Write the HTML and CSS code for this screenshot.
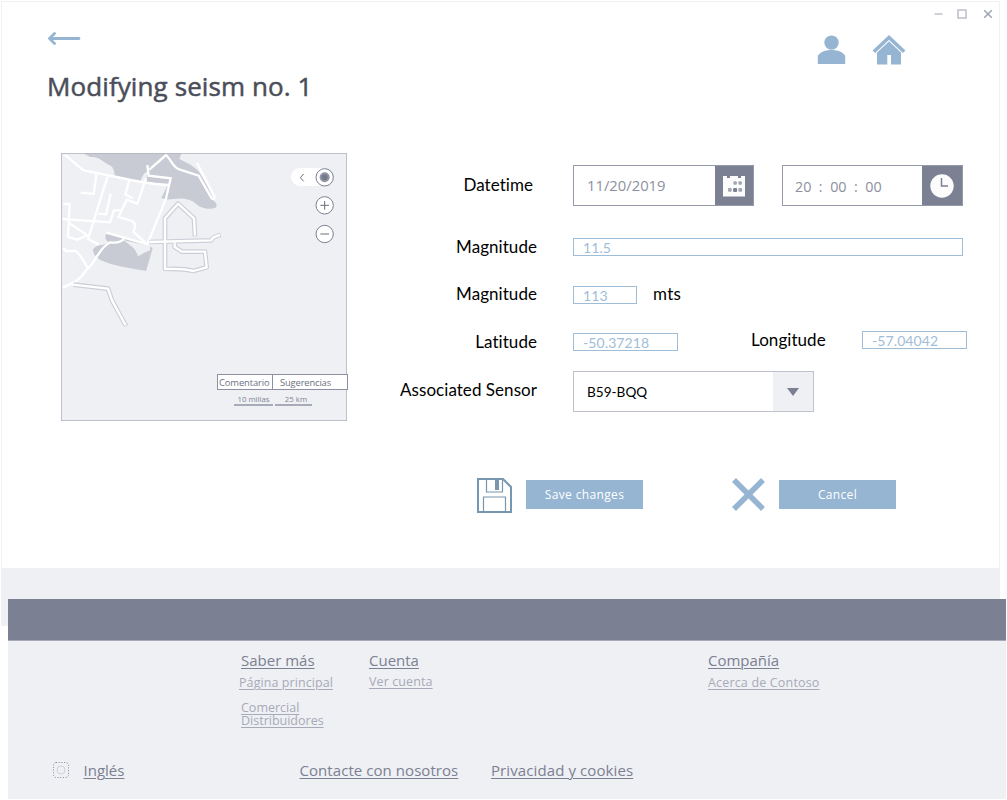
FILE: index.html
```html
<!DOCTYPE html>
<html lang="es">
<head>
<meta charset="utf-8">
<title>Modifying seism no. 1</title>
<link rel="stylesheet" href="styles.css">
</head>
<body>
<div class="window">
  <div class="titlebar">
    <svg class="win-min" width="9" height="12" viewBox="0 0 9 12"><path d="M0.5 6H8.5" stroke="#cfd0d8" stroke-width="2"/></svg>
    <svg class="win-max" width="10" height="12" viewBox="0 0 10 12"><rect x="1" y="2" width="8" height="8" fill="none" stroke="#b3b6c2" stroke-width="1.3"/></svg>
    <svg class="win-close" width="10" height="12" viewBox="0 0 10 12"><path d="M1.2 2.2 8.8 9.8M8.8 2.2 1.2 9.8" stroke="#a0a4b2" stroke-width="1.5"/></svg>
  </div>
  <div class="topbar">
    <svg class="back" width="34" height="14" viewBox="0 0 34 14"><path d="M31 6.5H1.5M6.5 1.5 1.5 6.5 6.5 11.5" fill="none" stroke="#95b5d2" stroke-width="2.8" stroke-linecap="round" stroke-linejoin="round"/></svg>
    <div class="nav-icons">
      <svg width="29" height="30" viewBox="0 0 29 30" fill="#95b5d2"><circle cx="14.5" cy="7.6" r="7.2"/><path d="M.8 29V21C3 17 8 15 14.5 15S26 17 28.2 21V29Z"/></svg>
      <svg width="34" height="30" viewBox="0 0 34 30"><path d="M5 15 17 4.5 29 15V29.5H19V20H15.3V29.5H5Z" fill="#95b5d2"/><path d="M1.8 17.6 17 3.4 32.2 17.6" fill="none" stroke="#fff" stroke-width="4.2"/><path d="M1.8 16.7 17 2.5 32.2 16.7" fill="none" stroke="#95b5d2" stroke-width="3.6"/></svg>
    </div>
  </div>
  <h1 class="title">Modifying seism no. 1</h1>
  <div class="content">
    <div class="map">
      <svg width="286" height="268" viewBox="33 24 858 804">
        <rect x="33" y="24" width="858" height="804" fill="#eff0f4"/>
        <g fill="#c8cad4">
          <path d="M98 24H395L388 42C398 48 432 60 448 82C458 100 478 130 491 166Q505 182 497 188C478 195 452 190 438 176C420 160 394 158 370 162Q345 166 334 158L354 120 272 108 288 78 272 108 194 92Q192 66 182 62C160 54 152 34 120 36Z"/>
          <path d="M168 266 292 300 308 310 288 378C250 370 190 364 150 344Q126 330 130 312Q140 300 158 300L176 292Q162 284 168 266Z"/>
        </g>
        <path d="M272 107Q280 82 292 80L290 110ZM215 284 262 295 300 302 300 316Q280 324 264 334Q256 312 244 304Q230 290 215 284Z" fill="#eff0f4"/>
        <g fill="none" stroke="#fff" stroke-width="7">
          <path d="M45 30C75 52 85 68 105 77Q150 86 200 96C250 108 290 116 354 120"/>
          <path d="M298 74 348 30C365 45 368 68 390 74L446 92 485 160Q492 168 494 156L441 54"/>
          <path d="M292 60 296 92 362 100 348 160 292 298 168 262"/>
          <path d="M139 88 131 147 92 143M173 96C150 160 135 220 114 282L146 298M182 146 168 208 145 206M237 108 226 148 248 160M288 100 262 176 230 164 206 216 246 228Q262 236 250 260L292 298M38 222 180 232 192 196 212 196M40 177H59L54 276 82 284 110 272M54 232 114 272M40 308 48 318 78 318Q100 340 113 370"/>
          <path d="M38 428C80 410 92 402 108 376C140 350 145 310 180 292Q212 296 222 280"/>
        </g>
        <g fill="none" stroke-linejoin="round">
          <g stroke="#cdcfd8" stroke-width="14"><path d="M70 419 174 431 186 466 228 543M435 274 432 220 384 176 345 220V372Q400 370 430 378L470 367 465 320H396L374 306V290M298 291 484 286Q486 276 512 270"/></g>
          <g stroke="#fff" stroke-width="7"><path d="M68 419 174 431 186 466 227 541M435 272 432 220 384 176 345 220V372Q400 370 430 378L470 367 465 320H396L374 306V290M298 291 484 286Q486 276 510 270"/></g>
        </g>
        <rect x="723" y="69" width="125" height="54" rx="27" fill="#fff"/>
        <g fill="#fff" stroke="#7b8092" stroke-width="3"><circle cx="824" cy="97" r="26"/><circle cx="824" cy="181" r="26"/><circle cx="824" cy="267" r="26"/></g>
        <path d="M761 87 751 98 761 109M811 181H837M824 168V194M811 267H837" fill="none" stroke="#696e7d" stroke-width="3"/>
        <circle cx="824" cy="97" r="15" fill="#9397a5"/><circle cx="824" cy="97" r="9" fill="#757a8b"/>
        <rect x="34" y="25" width="856" height="802" fill="none" stroke="#b4b7c3" stroke-width="3"/>
      </svg>
      <div class="feedback"><span class="chip chip-a">Comentario</span><span class="chip chip-b">Sugerencias</span></div>
      <div class="scale"><span class="miles">10 millas</span><span class="km">25 km</span></div>
    </div>
    <div class="form">
      <div class="row row-date">
        <label class="label label-date">Datetime</label>
        <div class="picker"><span class="picker-value">11/20/2019</span><span class="picker-icon date-icon">
          <svg width="22" height="22" viewBox="0 0 22 22"><path d="M0 1H22V21.5H0Z" fill="#fcfcfd"/><path d="M4 0H7V3H4ZM15 0H18V3H15Z" fill="#7b8092"/><g fill="#a3a6b3"><rect x="10.4" y="6.3" width="3.5" height="3.5" rx="1"/><rect x="15.4" y="6.3" width="3.5" height="3.5" rx="1"/><rect x="5" y="13.1" width="3.7" height="3.7" rx="1"/><rect x="15.4" y="13.1" width="3.7" height="3.7" rx="1"/></g><rect x="10.1" y="13" width="4" height="4" rx="1" fill="#7b8092"/></svg>
        </span></div>
        <div class="picker time"><span class="time-value"><span class="hour">20</span><span>:</span><span>00</span><span>:</span><span>00</span></span><span class="picker-icon time-icon">
          <svg width="24" height="24" viewBox="0 0 24 24"><circle cx="12" cy="12" r="11.7" fill="#fcfcfd"/><path d="M11.5 4V12H18" fill="none" stroke="#7b8092" stroke-width="1.5"/></svg>
        </span></div>
      </div>
      <div class="row row-mag"><label class="label">Magnitude</label><div class="input wide">11.5</div></div>
      <div class="row row-depth"><label class="label">Magnitude</label><div class="input short">113</div><span class="unit">mts</span></div>
      <div class="row row-coord"><label class="label">Latitude</label><div class="input coord">-50.37218</div>
        <div class="longitude"><label class="label-long">Longitude</label><div class="input coord">-57.04042</div></div></div>
      <div class="row row-sensor"><label class="label label-sensor">Associated Sensor</label>
        <div class="select"><span class="select-value">B59-BQQ</span><span class="select-arrow"><svg width="12" height="8" viewBox="0 0 12 8"><path d="M0 0H12L6 8Z" fill="#7b8092"/></svg></span></div></div>
      <div class="actions">
        <svg width="35" height="35" viewBox="0 0 35 35" fill="none" stroke="#7797b0"><path d="M1 1H26L34 9V34H1Z" stroke-width="2"/><path d="M9.5 1V14H25.5V1M6.5 34V19H28.5V34" stroke-width="1.2"/><path d="M18 2H22V12H18Z" fill="#7797b0" stroke="none"/></svg>
        <button class="btn save">Save changes</button>
        <svg class="cross" width="33" height="33" viewBox="0 0 33 33"><path d="M2 2 31 31M31 2 2 31" stroke="#95b5d2" stroke-width="5.6"/></svg>
        <button class="btn cancel">Cancel</button>
      </div>
    </div>
  </div>
</div>
<footer class="footer">
  <div class="footer-bar"></div>
  <div class="footer-cols">
    <div class="col col-more"><a class="head saber">Saber más</a><a class="link pagina">Página principal</a><a class="link comercial">Comercial</a><a class="link distribuidores">Distribuidores</a></div>
    <div class="col col-account"><a class="head cuenta">Cuenta</a><a class="link vercuenta">Ver cuenta</a></div>
    <div class="col"><a class="head compania">Compañía</a><a class="link acerca">Acerca de Contoso</a></div>
  </div>
  <div class="footer-bottom">
    <svg width="18" height="18" viewBox="0 0 18 18" fill="none"><rect x="1.5" y="1.5" width="15" height="15" rx="2.5" stroke="#85899a" stroke-dasharray="1 1.7"/><circle cx="9" cy="9" r="4" stroke="#cfd1d9"/></svg>
    <div class="slot-lang"><a class="head">Inglés</a></div><div class="slot-contact"><a class="head contacte">Contacte con nosotros</a></div><a class="head privacidad">Privacidad y cookies</a>
  </div>
</footer>
</body>
</html>
```
FILE: styles.css
```css
* { box-sizing: border-box; }
body { margin: 0; width: 1007px; height: 800px; overflow: hidden; background: #fff; font-family: "Open Sans", "Noto Sans", sans-serif; font-variant-ligatures: none; }
svg { display: block; flex: none; }
span, a, label { white-space: nowrap; }
.window { width: 999px; height: 625px; margin: 1px 0 0 1px; border: 1px solid #f1f1f3; background: linear-gradient(#fff 566px, #eff0f4 566px); }
.titlebar { display: flex; justify-content: flex-end; height: 24px; padding: 6px 6px 0 0; }
.win-min { margin-right: 14px; }
.win-max { margin-right: 16px; }
.topbar { display: flex; justify-content: space-between; height: 40px; padding: 6px 93px 0 46px; }
.nav-icons { display: flex; gap: 26px; margin-top: 3px; }
.title { margin: 2px 0 0 45px; height: 36px; line-height: 36px; font-size: 26px; font-weight: 400; letter-spacing: .1px; -webkit-text-stroke: .5px #4a4e5a; color: #4a4e5a; white-space: nowrap; }
.content { display: flex; margin: 49px 0 0 59px; }
.map { position: relative; width: 286px; height: 268px; flex: none; }
.feedback { position: absolute; left: 156px; top: 221px; display: flex; font-size: 9.4px; color: #6d7282; line-height: 15px; }
.chip { height: 16px; border: 1px solid #8c90a0; background: #fff; }
.chip-a { width: 55px; padding-left: 1px; border-right: 0; letter-spacing: -.1px; }
.chip-b { width: 76px; padding-left: 7px; letter-spacing: -.15px; }
.scale { position: absolute; left: 173px; top: 240px; display: flex; gap: 2px; font-size: 7.8px; line-height: 12px; color: #7f8394; text-align: center; }
.miles, .km { height: 13px; border-bottom: 2px solid #a9acb8; }
.miles { width: 39px; }
.km { width: 37px; padding-left: 5px; }
.form { margin-left: 43px; padding-top: 12px; }
.row { display: flex; align-items: center; }
.label, .label-long, .unit { position: relative; font-family: Lato, sans-serif; font-size: 17px; line-height: 18px; letter-spacing: .05px; color: #000; }
.label { width: 147px; margin-right: 36px; text-align: right; }
.label-date { padding: 0 4px 2px 0; }
.row-date { height: 42px; }
.picker { display: flex; align-items: center; width: 181px; height: 41px; margin-top: -1px; border: 1px solid #9599a8; font-size: 14.8px; color: #8c90a0; }
.picker-value { width: 141px; padding: 0 0 2px 13px; }
.picker-icon { display: flex; align-items: center; justify-content: center; align-self: stretch; flex: 1; background: #7b8092; }
.time { margin-left: 28px; }
.time-value { display: flex; width: 139px; padding: 1px 0 0 12px; gap: 7.5px; font-size: 14.3px; }
.row-mag { height: 18px; margin-top: 31px; }
.row-depth { height: 18px; margin-top: 30px; }
.row-depth .label, .row-depth .unit { padding-bottom: 2px; }
.row-coord { height: 19px; margin-top: 28px; }
.row-sensor { height: 41px; margin-top: 20px; }
.input { height: 18px; border: 1px solid #9fbdd6; padding-left: 9px; font-family: Lato, sans-serif; font-size: 14px; line-height: 17px; letter-spacing: .1px; color: #9fbdd8; }
.wide { width: 390px; }
.short { width: 64px; }
.coord { width: 105px; }
.unit { margin-left: 16px; letter-spacing: .3px; }
.longitude { display: flex; align-items: center; margin: -4px 0 0 73px; }
.label-long { width: 75px; margin-right: 36px; }
.label-sensor { padding-bottom: 3px; }
.select { display: flex; align-items: center; width: 241px; height: 41px; border: 1px solid #bfc1cc; font-family: Lato, sans-serif; font-size: 13.6px; color: #000; }
.select-value { width: 199px; padding-left: 13px; }
.select-arrow { display: flex; align-items: center; justify-content: center; align-self: stretch; flex: 1; background: #eff0f4; }
.actions { display: flex; align-items: flex-start; margin: 66px 0 0 87px; }
.btn { width: 117px; height: 29px; margin: 2px 0 0 14px; padding: 0; border: 0; background: #95b5d2; color: #fff; font: 12px/29px "Open Sans", sans-serif; letter-spacing: .35px; }
.cross { margin-left: 89px; }
.cancel { margin-left: 14px; }
.footer { position: relative; width: 998px; height: 200px; margin: -27px 0 0 8px; background: #eff0f4; color: #7b8092; }
.footer-bar { height: 41px; background: #7b8092; border-bottom: 1px solid #a6a9b8; height: 42px; }
.footer-cols { display: flex; height: 118px; padding: 8px 0 0 233px; }
.col { display: flex; flex-direction: column; align-items: flex-start; }
.col-more { width: 128px; }
.col-account { width: 339px; }
.head, .link { text-decoration: underline; text-underline-offset: 2px; text-decoration-thickness: 1px; }
.head { font-size: 15px; line-height: 22px; }
.link { font-size: 12.5px; line-height: 22px; color: #a7aab7; }
.pagina { margin: 1px 0 0 -2px; letter-spacing: .08px; }
.vercuenta { letter-spacing: .1px; }
.acerca { margin-top: 1px; letter-spacing: .17px; }
.comercial { line-height: 13px; margin-top: 7px; }
.distribuidores { line-height: 13px; }
.footer-bottom { display: flex; align-items: center; height: 22px; padding-left: 44px; }
.slot-lang { width: 216px; margin-left: 13.5px; }
.slot-contact { width: 191.5px; }
.contacte { letter-spacing: .06px; }
.privacidad { letter-spacing: .1px; }
```
